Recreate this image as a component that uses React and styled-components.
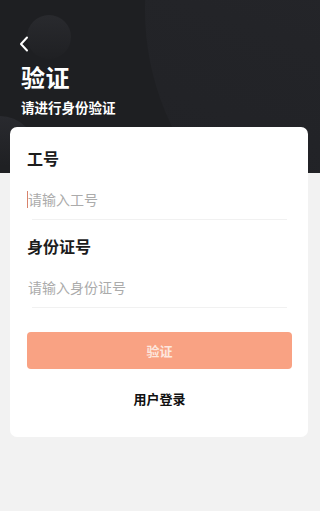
import React from 'react'
import styled, { createGlobalStyle } from 'styled-components'

const GlobalStyle = createGlobalStyle`
  html, body {
    margin: 0;
    padding: 0;
    background: #f2f2f2;
  }
  body {
    font-family: "Noto Sans CJK SC", "Noto Sans", sans-serif;
  }
  * {
    box-sizing: border-box;
  }
`

const Page = styled.div`
  width: 320px;
  min-height: 511px;
  background: #f2f2f2;
`

const Header = styled.header`
  position: relative;
  height: 173px;
  background: #1e1f22;
  overflow: hidden;
  padding: 36px 21px 0;
  color: #fff;
`

const Circle = styled.div`
  position: absolute;
  border-radius: 50%;
  left: ${p => p.x}px;
  top: ${p => p.y}px;
  width: ${p => p.size}px;
  height: ${p => p.size}px;
  background: ${p => p.bg};
`

const HeaderContent = styled.div`
  position: relative;
  display: flex;
  flex-direction: column;
`

const BackButton = styled.button`
  width: 16px;
  height: 16px;
  padding: 0;
  border: none;
  background: none;
  color: #fff;
  display: flex;
  align-items: center;
  justify-content: flex-start;
  margin-left: -2px;
`

const Title = styled.h1`
  margin: 8px 0 0;
  font-size: 24px;
  line-height: 34px;
  font-weight: 700;
  letter-spacing: 0.5px;
`

const Subtitle = styled.p`
  margin: 3px 0 0;
  font-size: 13.5px;
  line-height: 20px;
  font-weight: 700;
`

const Card = styled.main`
  position: relative;
  margin: -46px 12px 0 10px;
  background: #fff;
  border-radius: 7px;
  padding: 20px 16px 29px 17px;
  display: flex;
  flex-direction: column;
`

const Label = styled.div`
  font-size: 16px;
  line-height: 22px;
  font-weight: 700;
  color: #1c1c1c;
  margin-top: ${p => p.gap || 0}px;
`

const Field = styled.div`
  position: relative;
  height: 40px;
  margin-top: 10px;
  display: flex;
  align-items: center;
  &::after {
    content: '';
    position: absolute;
    left: 5px;
    right: 5px;
    bottom: -1px;
    height: 1px;
    background: #f1f1f1;
  }
`

const Caret = styled.span`
  position: absolute;
  left: 0;
  top: 12px;
  width: 1px;
  height: 17px;
  background: #d8836c;
`

const Input = styled.input`
  flex: 1;
  min-width: 0;
  border: none;
  outline: none;
  padding: 0 0 0 1px;
  font-family: inherit;
  font-size: 14px;
  color: #333;
  background: transparent;
  &::placeholder {
    color: #ababab;
  }
`

const SubmitButton = styled.button`
  margin-top: 25px;
  height: 37px;
  border: none;
  border-radius: 4px;
  background: #f9a283;
  color: #fde7de;
  font-family: inherit;
  font-size: 13px;
  font-weight: 700;
`

const LinkButton = styled.button`
  margin-top: 21px;
  border: none;
  background: none;
  padding: 0;
  font-family: inherit;
  font-size: 13px;
  line-height: 18px;
  font-weight: 700;
  color: #111;
`

const ChevronLeft = () => (
  <svg width="10" height="16" viewBox="0 0 10 16" fill="none">
    <path d="M8 1.5L2 8l6 6.5" stroke="#fff" strokeWidth="2" strokeLinecap="round" strokeLinejoin="round" />
  </svg>
)

export default function App() {
  return (
    <Page>
      <GlobalStyle />
      <Header>
        <Circle x={145} y={-255} size={530} bg="linear-gradient(200deg, #2a2b30 0%, #232428 60%, #202125 100%)" />
        <Circle x={27} y={15} size={44} bg="linear-gradient(180deg, #292a2e 0%, #1f2023 100%)" />
        <Circle x={-36} y={116} size={72} bg="linear-gradient(180deg, #292a2f 0%, #1f2023 70%)" />
        <HeaderContent>
          <BackButton aria-label="返回"><ChevronLeft /></BackButton>
          <Title>验证</Title>
          <Subtitle>请进行身份验证</Subtitle>
        </HeaderContent>
      </Header>
      <Card>
        <Label>工号</Label>
        <Field>
          <Caret />
          <Input placeholder="请输入工号" />
        </Field>
        <Label gap={16}>身份证号</Label>
        <Field>
          <Input placeholder="请输入身份证号" />
        </Field>
        <SubmitButton>验证</SubmitButton>
        <LinkButton>用户登录</LinkButton>
      </Card>
    </Page>
  )
}
